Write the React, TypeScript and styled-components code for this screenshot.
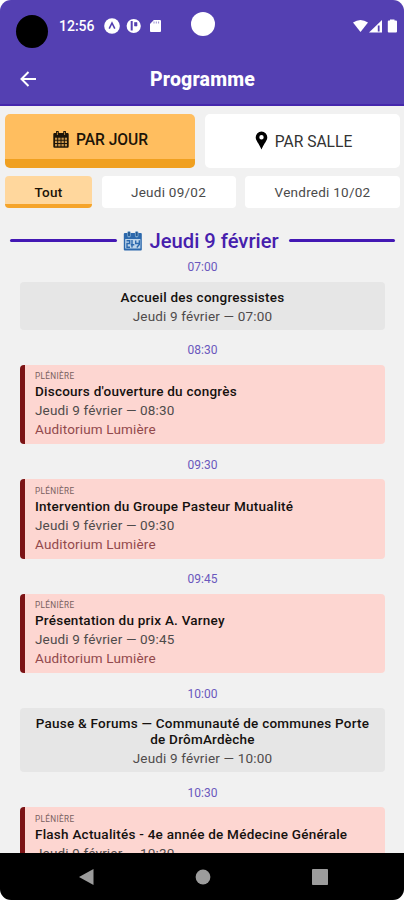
import React from "react";
import styled, { createGlobalStyle } from "styled-components";

const Global = createGlobalStyle`
  * { box-sizing: border-box; }
  body { margin: 0; background: #fff; font-family: Roboto, "Liberation Sans", sans-serif; }
`;

const Screen = styled.div`
  width: 404px;
  height: 900px;
  display: flex;
  flex-direction: column;
  overflow: hidden;
  border-radius: 11px;
  background: #f1f1f1;
`;

const Header = styled.header`
  flex: none;
  height: 106px;
  background: #5440b2;
  border-bottom: 2px solid #4527ac;
  color: #fff;
`;

const StatusBar = styled.div`
  display: grid;
  grid-template-columns: 1fr 24px 1fr;
  height: 52px;
  padding: 0 6px 0 16px;
`;

const StatusLeft = styled.div`
  display: flex;
  align-items: center;
  height: 52px;
`;

const Camera = styled.span`
  width: 32px;
  height: 33px;
  margin: 10px 11px 0 0;
  border-radius: 50%;
  background: #000;
`;

const Clock = styled.span`
  width: 45px;
  font-size: 14px;
  line-height: 18px;
  font-weight: 500;
  letter-spacing: 0;
`;

const Notifications = styled.svg`
  display: block;
`;

const Lens = styled.span`
  width: 24px;
  height: 24px;
  margin: 12px 0 0 -4px;
  border-radius: 50%;
  background: #fff;
`;

const StatusRight = styled.div`
  display: flex;
  align-items: center;
  justify-content: flex-end;
`;

const TitleBar = styled.div`
  display: grid;
  grid-template-columns: 36px 1fr 36px;
  align-items: center;
  height: 52px;
  padding: 3px 0 0 16px;
`;

const BackButton = styled.button`
  display: flex;
  padding: 0;
  border: 0;
  background: none;
  color: inherit;
`;

const Title = styled.h1`
  margin: 0 0 0 -15px;
  padding-top: 1px;
  font-size: 19.5px;
  line-height: 24px;
  font-weight: 800;
  letter-spacing: 0.2px;
  text-align: center;
`;

const ModeTabs = styled.div`
  flex: none;
  display: grid;
  grid-template-columns: 190px 195px;
  gap: 10px;
  padding: 8px 4px 0 5px;
`;

const ModeTab = styled.button<{ $active?: boolean }>`
  display: flex;
  align-items: center;
  justify-content: center;
  gap: 7px;
  height: 54px;
  border: 0;
  border-bottom: ${(p) => (p.$active ? "9px solid #f0a020" : "0")};
  border-radius: 5px;
  background: ${(p) => (p.$active ? "#ffbe5f" : "#fff")};
  color: ${(p) => (p.$active ? "#1c1408" : "#333")};
  font: ${(p) => (p.$active ? 500 : 400)} 15.6px/20px Roboto, sans-serif;
  padding: ${(p) => (p.$active ? "7px 0 0 1px" : "1px 0 0 2px")};
`;

const DayTabs = styled.div`
  flex: none;
  display: grid;
  grid-template-columns: 87px 134px 155px;
  gap: 9.5px;
  padding: 8px 0 0 5px;
`;

const DayTab = styled.button<{ $active?: boolean }>`
  height: 32px;
  padding: ${(p) => (p.$active ? "3px 0 0" : "0")};
  border: 0;
  border-bottom: ${(p) => (p.$active ? "4px solid #f5a42a" : "0")};
  border-radius: 4px;
  background: ${(p) => (p.$active ? "#ffd79d" : "#fff")};
  color: ${(p) => (p.$active ? "#1c1408" : "#4a4a4a")};
  font: ${(p) => (p.$active ? 500 : 400)} 13.5px/18px Roboto, sans-serif;
  letter-spacing: 0.25px;
`;

const Agenda = styled.main`
  flex: 1;
  min-height: 0;
  overflow: hidden;
  padding: 19.5px 19px 0 20px;
`;

const DayHeading = styled.div`
  display: flex;
  align-items: center;
  height: 26px;
  margin: 0 -10px;
`;

const Rule = styled.span`
  flex: 1;
  height: 3px;
  border-radius: 2px;
  background: #4318b4;
`;

const DayName = styled.h2`
  display: flex;
  align-items: center;
  gap: 7px;
  width: 172px;
  margin: 0;
  padding: 1px 0 0 6px;
  color: #4620ad;
  font-size: 20.2px;
  line-height: 24px;
  font-weight: 500;
  white-space: nowrap;
`;

const Slot = styled.section`
  display: flex;
  flex-direction: column;
`;

const SlotTime = styled.time`
  height: 35px;
  padding-top: 11.5px;
  color: #6a58bd;
  font-size: 12px;
  line-height: 18px;
  text-align: center;
  ${Slot}:first-of-type & {
    height: 28px;
    padding-top: 4.5px;
  }
`;

const Card = styled.article<{ $plenary?: boolean }>`
  padding: ${(p) => (p.$plenary ? "6.5px 10px 4px" : "7px 10px 5px")};
  border-left: ${(p) => (p.$plenary ? "5px solid #7c1315" : "0")};
  border-radius: 4px;
  background: ${(p) => (p.$plenary ? "#fdd6d1" : "#e6e6e6")};
  text-align: ${(p) => (p.$plenary ? "left" : "center")};
  min-height: ${(p) => (p.$plenary ? "79.6px" : "47.5px")};
`;

const Kind = styled.div`
  color: #79605f;
  font-size: 8.2px;
  line-height: 10px;
  height: 12px;
  letter-spacing: 0.35px;
`;

const EventTitle = styled.h3`
  margin: 0;
  color: #15110f;
  font-size: 13.5px;
  line-height: 16px;
  font-weight: 500;
  letter-spacing: 0.24px;
`;

const EventLine = styled.div<{ $room?: boolean }>`
  color: ${(p) => (p.$room ? "#92494c" : "#4f4b4b")};
  font-size: 13.5px;
  line-height: 18px;
  margin-top: ${(p) => (p.$room ? "1px" : "2px")};
  letter-spacing: 0.16px;
`;

const NavBar = styled.nav`
  flex: none;
  display: grid;
  grid-template-columns: repeat(3, 117px);
  justify-content: center;
  align-items: center;
  justify-items: center;
  height: 47px;
  padding-left: 1px;
  background: #000;
`;

const slots = [
  { time: "07:00", title: "Accueil des congressistes" },
  { time: "08:30", title: "Discours d'ouverture du congrès", plenary: true },
  { time: "09:30", title: "Intervention du Groupe Pasteur Mutualité", plenary: true },
  { time: "09:45", title: "Présentation du prix A. Varney", plenary: true },
  { time: "10:00", title: "Pause & Forums — Communauté de communes Porte de DrômArdèche" },
  { time: "10:30", title: "Flash Actualités - 4e année de Médecine Générale", plenary: true },
];

const CalendarIcon = () => (
  <svg width="16" height="18" viewBox="0 0 16 18">
    <path
      fill="#1c1408"
      fillRule="evenodd"
      d="M3 2V1a1.4 1.4 0 0 1 2.8 0v1h4.4V1A1.4 1.4 0 0 1 13 1v1h1.5q1.2 0 1.2 1.2v12.3q0 1.2-1.2 1.2h-13Q.3 16.7.3 15.500V3.200Q.3 2 1.500 2ZM2 6.700v2h2.200v-2Zm3.200 0v2h2.300v-2Zm3.300 0v2h2.300v-2Zm3.300 0v2H14v-2ZM2 9.700v2.200h2.200V9.700Zm3.200 0v2.200h2.300V9.700Zm3.300 0v2.200h2.300V9.700Zm3.300 0v2.200H14V9.700ZM2 12.900v2.300h2.200v-2.300Zm3.200 0v2.300h2.300v-2.300Zm3.300 0v2.300h2.300v-2.300Zm3.300 0v2.300H14v-2.300Z"
    />
    <path d="M2 10.800h12M2 14h12M2 7.700h12" stroke="#1c1408" strokeOpacity=".25" strokeWidth="2" />
    <path d="M4.400 1v3M11.600 1v3" stroke="#c68f3c" strokeWidth=".9" />
  </svg>
);

const PinIcon = () => (
  <svg width="13" height="22" viewBox="0 0 13 22">
    <path
      fill="#000"
      fillRule="evenodd"
      d="M6.500.5A5.800 5.800 0 0 0 .7 6.300C.7 9.600 3.600 12 6.500 18.500 9.400 12 12.300 9.600 12.300 6.300A5.800 5.800 0 0 0 6.500.5Zm0 3.600a2.200 2.200 0 1 1 0 4.400 2.200 2.200 0 0 1 0-4.400Z"
    />
  </svg>
);

const DayIcon = () => (
  <svg width="20" height="21" viewBox="0 0 20 21">
    <rect x=".8" y="2" width="18" height="17.500" rx="1" fill="#2c69ad" />
    <rect x="2.200" y="8" width="15.200" height="9.500" fill="#bdd5ea" />
    <path d="M6 1.800v3M13.700 1.800v3" stroke="#77a6cf" strokeWidth="3.600" strokeLinecap="round" />
    <path d="M6 1v4M13.700 1v4" stroke="#24578f" strokeWidth="1.800" />
    <path
      d="M3.500 9.700h3.200v2.800H4v3.800h3M9 9v7.500M7.800 13.800h3.500M12.700 9.500v3h3.600M16.300 9.300v4.200l-2.500 3"
      fill="none"
      stroke="#2c69ad"
      strokeWidth="1.400"
    />
  </svg>
);

export default function App() {
  return (
    <>
      <Global />
      <Screen>
        <Header>
          <StatusBar>
            <StatusLeft>
              <Camera />
              <Clock>12:56</Clock>
              <Notifications width="58" height="18" viewBox="104 17 58 18">
                <circle cx="112" cy="26" r="7.800" fill="#fff" />
                <path d="M109.200 28.700 112 23l2.800 5.700" fill="none" stroke="#5440b2" strokeWidth="1.600" />
                <circle cx="133.700" cy="26" r="7.100" fill="#fff" />
                <path d="M131.700 21v9.500" stroke="#5440b2" strokeWidth="2" />
                <path d="M134.500 22.500h2.500v3.500h-2.500Z" fill="#5440b2" stroke="#5440b2" strokeWidth=".6" />
                <path d="M153.800 20H160q1 0 1 1v10q0 1-1 1h-9q-1 0-1-1v-7Z" fill="#fff" />
                <path d="M154 21.500v2M156.300 21.500v2M158.600 21.500v2" stroke="#8e82cc" strokeWidth=".9" />
              </Notifications>
            </StatusLeft>
            <Lens />
            <StatusRight>
              <svg width="46" height="16" viewBox="353 18 46 16">
                <path d="M354 22.500q7.500-5 15 0L361.500 32Z" fill="#fff" />
                <path d="M370 32.500 383 20v12.500Z" fill="#fff" />
                <path d="M379.700 25.500v6" stroke="#5440b2" strokeWidth="1.800" />
                <path d="M391 20.500v-1h4.500v1H397q1 0 1 1v10q0 1-1 1h-7.200q-1 0-1-1v-10q0-1 1-1Z" fill="#fff" />
              </svg>
            </StatusRight>
          </StatusBar>
          <TitleBar>
            <BackButton aria-label="Retour">
              <svg width="24" height="20" viewBox="0 0 24 20">
                <path d="M20 9H5.500M12.500 2 5.500 9l7 7" fill="none" stroke="#fff" strokeWidth="2" />
              </svg>
            </BackButton>
            <Title>Programme</Title>
          </TitleBar>
        </Header>
        <ModeTabs>
          <ModeTab $active>
            <CalendarIcon />
            PAR JOUR
          </ModeTab>
          <ModeTab>
            <PinIcon />
            PAR SALLE
          </ModeTab>
        </ModeTabs>
        <DayTabs>
          <DayTab $active>Tout</DayTab>
          <DayTab>Jeudi 09/02</DayTab>
          <DayTab>Vendredi 10/02</DayTab>
        </DayTabs>
        <Agenda>
          <DayHeading>
            <Rule />
            <DayName>
              <DayIcon />
              Jeudi 9 février
            </DayName>
            <Rule />
          </DayHeading>
          {slots.map((s) => (
            <Slot key={s.time}>
              <SlotTime>{s.time}</SlotTime>
              <Card $plenary={s.plenary}>
                {s.plenary && <Kind>PLÉNIÈRE</Kind>}
                <EventTitle>{s.title}</EventTitle>
                <EventLine>Jeudi 9 février — {s.time}</EventLine>
                {s.plenary && <EventLine $room>Auditorium Lumière</EventLine>}
              </Card>
            </Slot>
          ))}
        </Agenda>
        <NavBar>
          <svg width="18" height="18" viewBox="0 0 18 18">
            <path d="M16.500 1v16L2 9Z" fill="#9c9c9c" />
          </svg>
          <svg width="16" height="16" viewBox="0 0 16 16">
            <circle cx="8" cy="8" r="7.400" fill="#9c9c9c" />
          </svg>
          <svg width="16" height="16" viewBox="0 0 16 16">
            <rect width="16" height="16" rx=".8" fill="#9c9c9c" />
          </svg>
        </NavBar>
      </Screen>
    </>
  );
}
